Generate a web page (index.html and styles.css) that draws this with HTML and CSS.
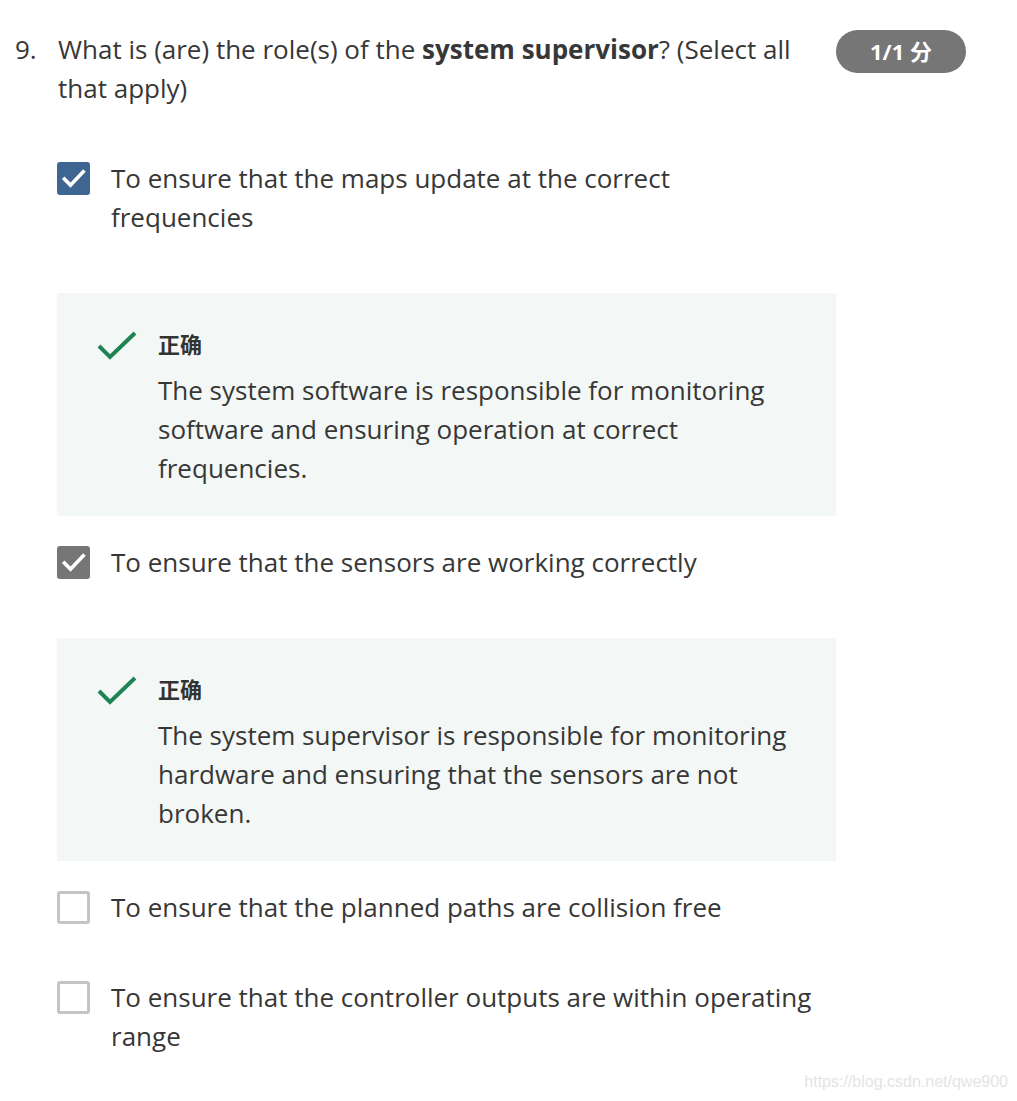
FILE: index.html
```html
<!DOCTYPE html>
<html lang="en">
<head>
<meta charset="utf-8">
<title>Question 9</title>
<link rel="stylesheet" href="styles.css">
</head>
<body>
<div class="question">
  <div class="q-head">
    <div class="q-num">9.</div>
    <div class="q-text">What is (are) the role(s) of the <strong>system supervisor</strong>? (Select all that apply)</div>
    <div class="badge">1/1 分</div>
  </div>

  <div class="option">
    <span class="box checked blue"><svg viewBox="0 0 24 24"><path d="M4.5 12.5l5 5L20 6.5"/></svg></span>
    <div class="opt-text">To ensure that the maps update at the correct frequencies</div>
  </div>
  <div class="feedback">
    <svg class="tick" viewBox="0 0 40 30"><path d="M2 16l11 11L38 3"/></svg>
    <div class="fb-body">
      <div class="fb-title">正确</div>
      <div class="fb-text">The system software is responsible for monitoring software and ensuring operation at correct frequencies.</div>
    </div>
  </div>

  <div class="option">
    <span class="box checked gray"><svg viewBox="0 0 24 24"><path d="M4.5 12.5l5 5L20 6.5"/></svg></span>
    <div class="opt-text">To ensure that the sensors are working correctly</div>
  </div>
  <div class="feedback">
    <svg class="tick" viewBox="0 0 40 30"><path d="M2 16l11 11L38 3"/></svg>
    <div class="fb-body">
      <div class="fb-title">正确</div>
      <div class="fb-text">The system supervisor is responsible for monitoring hardware and ensuring that the sensors are not broken.</div>
    </div>
  </div>

  <div class="option">
    <span class="box"></span>
    <div class="opt-text">To ensure that the planned paths are collision free</div>
  </div>

  <div class="option last">
    <span class="box"></span>
    <div class="opt-text">To ensure that the controller outputs are within operating range</div>
  </div>
</div>
<div class="watermark">https://blog.csdn.net/qwe900</div>
</body>
</html>
```
FILE: styles.css
```css
html, body {
  margin: 0;
  padding: 0;
  background: #ffffff;
}
body {
  font-family: "Open Sans", "Noto Sans CJK SC", sans-serif;
  color: #373737;
  font-size: 26px;
  line-height: 39px;
  width: 1017px;
  height: 1101px;
  position: relative;
  overflow: hidden;
}
.question {
  padding: 30px 0 0 15px;
}
.q-head {
  display: flex;
  align-items: flex-start;
}
.q-num {
  width: 43px;
  flex: none;
}
.q-text {
  width: 745px;
  flex: none;
}
.q-text strong {
  font-weight: 700;
}
.badge {
  margin-left: 33px;
  margin-top: 0;
  width: 130px;
  height: 43px;
  border-radius: 22px;
  background: #767676;
  color: #fff;
  font-weight: 700;
  font-size: 22px;
  line-height: 43px;
  text-align: center;
  flex: none;
}
.option {
  display: flex;
  align-items: flex-start;
  margin-left: 42px;
  margin-top: 51px;
}
.feedback + .option {
  margin-top: 27px;
}
.box {
  flex: none;
  width: 33px;
  height: 33px;
  box-sizing: border-box;
  border: 3px solid #c4c4c4;
  border-radius: 3px;
  margin-top: 3px;
  margin-right: 21px;
  display: flex;
  align-items: center;
  justify-content: center;
}
.box.checked {
  border: none;
}
.box.blue {
  background: #3f6592;
}
.box.gray {
  background: #767676;
}
.box svg {
  width: 29px;
  height: 29px;
  fill: none;
  stroke: #fff;
  stroke-width: 3;
  stroke-linecap: square;
}
.opt-text {
  width: 705px;
}
.feedback {
  margin: 56px 0 0 42px;
  width: 779px;
  box-sizing: border-box;
  background: #f3f8f6;
  padding: 36px 40px 28px 40px;
  display: flex;
  align-items: flex-start;
}
.tick {
  flex: none;
  width: 40px;
  height: 30px;
  margin-top: 1px;
  margin-right: 21px;
  fill: none;
  stroke: #1f8454;
  stroke-width: 4;
}
.fb-title {
  font-weight: 700;
  font-size: 22px;
  line-height: 30px;
  margin-bottom: 12px;
  color: #333;
}
.fb-text {
  width: 640px;
}
.watermark {
  position: absolute;
  right: 9px;
  bottom: 10px;
  font-family: "Liberation Sans", Arial, sans-serif;
  font-size: 16px;
  line-height: 18px;
  color: #e4e4e4;
}
```
